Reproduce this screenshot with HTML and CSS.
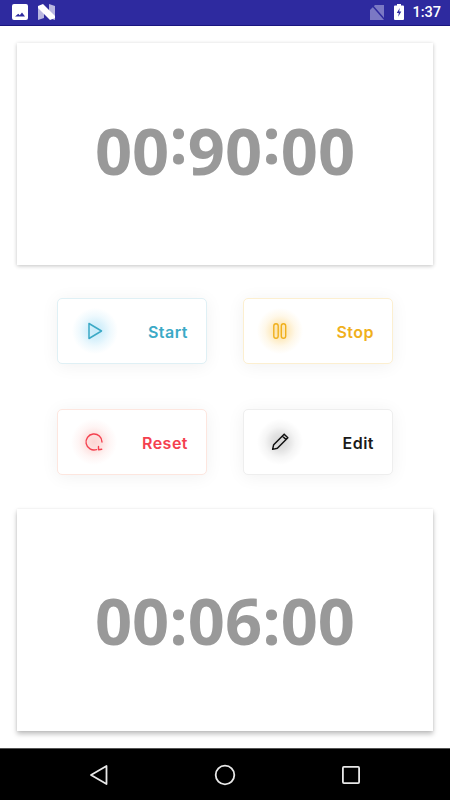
FILE: index.html
```html
<!DOCTYPE html>
<html lang="en">
<head>
    <meta charset="UTF-8">
    <meta name="viewport" content="width=device-width, initial-scale=1.0">
    <title>Timer</title>
    <link rel="stylesheet" href="styles.css">
</head>
<body>

    <header class="status-bar">
        <svg class="status-icon" width="16" height="16" viewBox="0 0 16 16">
            <path fill="#fff" fill-rule="evenodd" d="M2 0h12a2 2 0 0 1 2 2v12a2 2 0 0 1-2 2H2a2 2 0 0 1-2-2V2a2 2 0 0 1 2-2zM3 12.500h10L10 8.500l-2.200 2.800-1.500-1.500z"/>
        </svg>
        <svg class="status-icon" width="17" height="16" viewBox="0 0 17 16">
            <path fill="#b9b7e0" d="M0 2l6 2v10l-6 2zM11 0l6 2v14l-6-2z"/>
            <path fill="#fff" d="M0 2l5-2 12 12v2l-5 2L0 4z"/>
        </svg>
        <span class="status-spacer"></span>
        <svg class="status-icon" width="14" height="15" viewBox="0 0 14 15">
            <path fill="#7b78c4" d="M5 0h9v15H0V5z"/>
            <path stroke="#2e2a9f" stroke-width="1.500" d="M1-1l14 16"/>
        </svg>
        <svg class="status-icon battery" width="10" height="16" viewBox="0 0 10 16">
            <path fill="#fff" fill-rule="evenodd" d="M3 0h4v1.500h2a1 1 0 0 1 1 1V15a1 1 0 0 1-1 1H1a1 1 0 0 1-1-1V2.500a1 1 0 0 1 1-1h2zM5.700 4L2.800 9h2l-.6 3.800L7.300 7.500H5.200z"/>
        </svg>
        <span class="status-time">1:37</span>
    </header>

    <main class="content">
        <section class="timer-card top">
            <div class="timer">00<span class="colon-up">:</span>90<span class="colon-up">:</span>00</div>
        </section>

        <section class="controls">
            <button class="control start" type="button">
                <span class="glow">
                    <svg width="18" height="18" viewBox="0 0 18 18">
                        <path fill="none" stroke="#3ba9c6" stroke-width="1.500" stroke-linejoin="round" d="M3 1.500v15L15.500 9z"/>
                    </svg>
                </span>
                Start
            </button>
            <button class="control stop" type="button">
                <span class="glow">
                    <svg width="18" height="18" viewBox="0 0 18 18">
                        <rect x="2.800" y="1.800" width="4.400" height="14.400" rx="2.200" fill="none" stroke="#f0b01c" stroke-width="1.400"/>
                        <rect x="10.300" y="1.800" width="4.400" height="14.400" rx="2.200" fill="none" stroke="#f0b01c" stroke-width="1.400"/>
                    </svg>
                </span>
                Stop
            </button>
            <button class="control reset" type="button">
                <span class="glow">
                    <svg width="20" height="20" viewBox="0 0 20 20">
                        <path fill="none" stroke="#f4404e" stroke-width="1.400" stroke-linecap="round" d="M12.500 17.600A8 8 0 1 1 18 10"/>
                        <path fill="none" stroke="#f4404e" stroke-width="1.400" stroke-linecap="round" stroke-linejoin="round" d="M14.500 14.500v3.200l3.200-.4"/>
                    </svg>
                </span>
                Reset
            </button>
            <button class="control edit" type="button">
                <span class="glow">
                    <svg width="21" height="21" viewBox="0 0 20 20">
                        <path fill="none" stroke="#111" stroke-width="1.400" stroke-linejoin="round" d="M2.500 17.500l1-4.500L13.500 3l3.500 3.500-10 10zM11.800 4.700l3.500 3.500"/>
                    </svg>
                </span>
                Edit
            </button>
        </section>

        <section class="timer-card bottom">
            <div class="timer">00:06:00</div>
        </section>
    </main>

    <footer class="nav-bar">
        <svg width="20" height="22" viewBox="0 0 20 22">
            <path fill="none" stroke="#e8e8e8" stroke-width="1.800" stroke-linejoin="round" d="M17.500 2v18L2 11z"/>
        </svg>
        <svg width="22" height="22" viewBox="0 0 22 22">
            <circle cx="11" cy="11" r="9.300" fill="none" stroke="#e8e8e8" stroke-width="1.800"/>
        </svg>
        <svg width="20" height="20" viewBox="0 0 20 20">
            <rect x="1.900" y="1.900" width="16.200" height="16.200" rx="1" fill="none" stroke="#e8e8e8" stroke-width="1.800"/>
        </svg>
    </footer>

</body>
</html>
```

FILE: styles.css
```css
* {
    box-sizing: border-box;
}

body {
    margin: 0;
    height: 800px;
    display: flex;
    flex-direction: column;
    background-color: #ffffff;
    font-family: 'Inter', sans-serif;
    overflow: hidden;
}

.status-bar {
    height: 26px;
    display: flex;
    align-items: center;
    padding: 0 9px 1px 12px;
    background-color: #2e2a9f;
    border-bottom: 1px solid #1a1580;
}

.status-icon {
    margin-right: 10px;
    flex-shrink: 0;
}

.status-spacer {
    flex: 1;
}

.battery {
    margin-right: 8px;
}

.status-time {
    font-family: 'Roboto', sans-serif;
    font-size: 14.500px;
    font-weight: 500;
    color: #ffffff;
}

.content {
    flex: 1;
    display: flex;
    flex-direction: column;
    padding: 17px 17px 0;
}

.timer-card {
    height: 222px;
    display: flex;
    align-items: center;
    justify-content: center;
    background-color: #ffffff;
}

.timer-card.top {
    padding-bottom: 9px;
    box-shadow: 0 1px 4px rgba(0, 0, 0, 0.24);
}

.timer-card.bottom {
    box-shadow: 0 3px 5px rgba(0, 0, 0, 0.26), 0 0 2px rgba(0, 0, 0, 0.08);
}

.timer {
    font-family: 'Open Sans', sans-serif;
    font-size: 65px;
    font-weight: 700;
    line-height: 70px;
    color: #999999;
}

.colon-up {
    display: inline-block;
    transform: translateY(-11px);
}

.controls {
    display: grid;
    grid-template-columns: 150px 150px;
    grid-auto-rows: 66px;
    justify-content: center;
    column-gap: 36px;
    row-gap: 45px;
    margin: 33px 0 34px;
}

.control {
    display: flex;
    align-items: center;
    justify-content: space-between;
    padding: 2px 18px 0 15px;
    background-color: #ffffff;
    border: 1px solid #eeeeee;
    border-radius: 5px;
    box-shadow: 0 2px 18px rgba(0, 0, 0, 0.06);
    font-family: 'Inter', sans-serif;
    font-size: 16px;
    font-weight: 600;
    letter-spacing: 0.5px;
}

.glow {
    width: 48px;
    height: 48px;
    margin: -3px -2px 0;
    display: flex;
    align-items: center;
    justify-content: center;
    border-radius: 50%;
}

.start {
    color: #3ba9c6;
    border-color: #dff0f5;
}

.start .glow {
    background: radial-gradient(circle, rgba(90, 195, 240, 0.34) 0%, rgba(90, 195, 240, 0.24) 25%, rgba(90, 195, 240, 0.1) 45%, rgba(90, 195, 240, 0) 68%);
}

.stop {
    padding-left: 14px;
    color: #f0b01c;
    border-color: #fcefd0;
}

.stop .glow {
    background: radial-gradient(circle, rgba(250, 185, 40, 0.42) 0%, rgba(250, 185, 40, 0.28) 25%, rgba(250, 185, 40, 0.1) 45%, rgba(250, 185, 40, 0) 68%);
}

.reset {
    padding-left: 14px;
    color: #f4404e;
    border-color: #fde6df;
}

.reset .glow {
    background: radial-gradient(circle, rgba(245, 80, 70, 0.24) 0%, rgba(245, 80, 70, 0.16) 25%, rgba(245, 80, 70, 0.06) 45%, rgba(245, 80, 70, 0) 68%);
}

.edit {
    padding-left: 14px;
    color: #1a1a1a;
}

.edit .glow {
    background: radial-gradient(circle, rgba(0, 0, 0, 0.16) 0%, rgba(0, 0, 0, 0.11) 25%, rgba(0, 0, 0, 0.04) 45%, rgba(0, 0, 0, 0) 68%);
}

.nav-bar {
    height: 52px;
    display: flex;
    align-items: center;
    justify-content: space-between;
    padding: 0 89px;
    background-color: #000000;
    border-top: 1px solid #555555;
}
```
